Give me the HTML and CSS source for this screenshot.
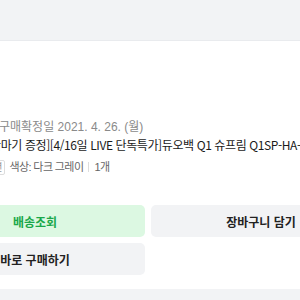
FILE: index.html
```html
<!DOCTYPE html>
<html lang="ko">
<head>
    <meta charset="UTF-8">
    <meta name="viewport" content="width=device-width, initial-scale=1.0">
    <title>주문상세</title>
    <link rel="stylesheet" href="styles.css">
</head>
<body>
    <div class="top-band"></div>

    <div class="order">
        <div class="info">
            <p class="date">구매확정일 2021. 4. 26. (월)</p>
            <p class="title">안마기 증정][4/16일 LIVE 단독특가]듀오백 Q1 슈프림 Q1SP-HA-H 인체공학 의자</p>
            <p class="option"><span class="tag">옵션</span> 색상: 다크 그레이 <span class="sep"></span> 1개</p>
        </div>

        <div class="actions">
            <button class="btn btn-green">배송조회</button>
            <button class="btn">장바구니 담기</button>
            <button class="btn">바로 구매하기</button>
        </div>
    </div>

    <div class="bottom-band"></div>
</body>
</html>
```

FILE: styles.css
```css
body {
    font-family: "Liberation Sans", "Noto Sans CJK KR", sans-serif;
    background-color: #fff;
    margin: 0;
    width: 300px;
    height: 300px;
    overflow: hidden;
}

.top-band {
    height: 40px;
    background-color: #f2f3f5;
    border-bottom: 1px solid #e9ebee;
}

.order {
    width: 446px;
    margin-left: -75px;
    padding-top: 77px;
}

.info {
    padding-left: 74px;
    white-space: nowrap;
}

.info p {
    margin: 0;
}

.date {
    font-size: 12px;
    line-height: 18px;
    color: #8a8a8a;
}

.title {
    margin-left: -9px !important;
    margin-top: 0 !important;
    font-family: "Noto Sans CJK KR", sans-serif;
    font-size: 12px;
    letter-spacing: -0.4px;
    line-height: 18px;
    color: #1a1a1a;
}

.option {
    margin-left: -18px !important;
    margin-top: 4px !important;
    font-size: 11px;
    letter-spacing: -0.6px;
    line-height: 18px;
    color: #666;
    display: flex;
    align-items: center;
    gap: 4px;
}

.tag {
    font-size: 10px;
    line-height: 13px;
    letter-spacing: 0;
    padding: 0 2px;
    border: 1px solid #ddd;
    border-radius: 2px;
    color: #999;
}

.sep {
    display: inline-block;
    width: 1px;
    height: 10px;
    background-color: #ddd;
    margin: 0 1px;
}

.actions {
    display: grid;
    grid-template-columns: 1fr 1fr;
    gap: 6px;
    margin-top: 29px;
}

.btn {
    height: 32px;
    border: none;
    border-radius: 5px;
    background-color: #f2f3f5;
    font-family: inherit;
    font-size: 12px;
    font-weight: 700;
    color: #222;
    cursor: pointer;
}

.btn-green {
    background-color: #dcf8e2;
    color: #1aa84a;
}

.bottom-band {
    margin-top: 14px;
    height: 20px;
    background-color: #f2f3f5;
}
```
